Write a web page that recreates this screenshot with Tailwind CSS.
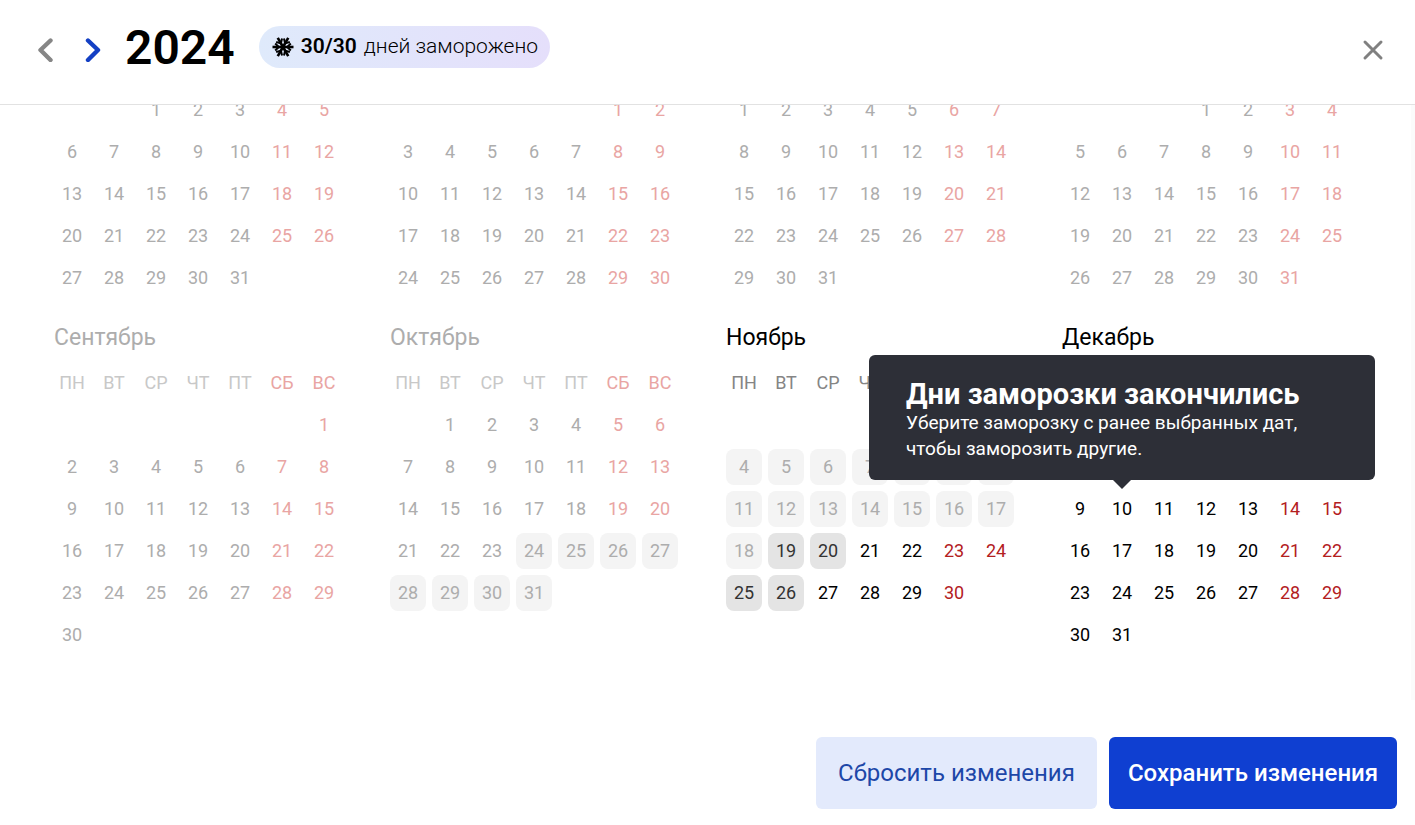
<!DOCTYPE html>
<html lang="ru">
<head>
    <meta charset="UTF-8">
    <meta name="viewport" content="width=device-width, initial-scale=1.0">
    <title>Заморозка дней</title>
    <script src="https://cdn.jsdelivr.net/npm/@tailwindcss/browser@4"></script>
</head>
<body class="bg-white font-['Roboto','Noto_Sans',sans-serif] text-black">
    <div class="flex h-screen flex-col">

        <!-- Шапка -->
        <header class="flex h-[105px] shrink-0 items-start border-b border-[#e2e2e2] pl-8 pr-[26px]">
            <button type="button" aria-label="Предыдущий год" class="mt-[38px] text-[#868686]">
                <svg class="h-6 w-6" viewBox="0 0 24 24" fill="none" stroke="currentColor" stroke-width="4.4" stroke-linecap="round" stroke-linejoin="round"><path d="M18.500 2.500L8.500 12l10 10"/></svg>
            </button>
            <button type="button" aria-label="Следующий год" class="ml-6 mt-[38px] text-[#1440c4]">
                <svg class="h-6 w-6" viewBox="0 0 24 24" fill="none" stroke="currentColor" stroke-width="4.4" stroke-linecap="round" stroke-linejoin="round"><path d="M8 2.500L18 12 8 22"/></svg>
            </button>
            <h1 class="ml-[21px] mt-5 text-5xl leading-14 font-semibold">2024</h1>
            <div class="ml-6 mt-[26px] flex h-[42px] items-center gap-1.5 rounded-full bg-linear-to-r from-[#dfeafb] to-[#e5dffb] px-3 text-[21px]">
                <svg class="h-6 w-6" viewBox="0 0 24 24" fill="none" stroke="currentColor" stroke-width="2.600">
                    <g id="arm"><path d="M12 12h10.500"/><path stroke-width="2" d="M19.800 8.600l-3.600 3.400 3.600 3.400"/></g>
                    <use href="#arm" transform="rotate(60 12 12)"/>
                    <use href="#arm" transform="rotate(120 12 12)"/>
                    <use href="#arm" transform="rotate(180 12 12)"/>
                    <use href="#arm" transform="rotate(240 12 12)"/>
                    <use href="#arm" transform="rotate(300 12 12)"/>
                </svg>
                <p class="font-light"><b class="mr-0.5 font-semibold">30/30</b> дней заморожено</p>
            </div>
            <button type="button" aria-label="Закрыть" class="ml-auto mt-[38px] text-[#808080]">
                <svg class="h-6 w-8" viewBox="0 0 32 24" fill="none" stroke="currentColor" stroke-width="3" stroke-linecap="round"><path d="M8 4l16 16M24 4L8 20"/></svg>
            </button>
        </header>

        <!-- Календарь, прокручен до конца года -->
        <main class="flex min-h-0 flex-1 flex-col justify-end overflow-hidden border-r-4 border-[#fbfbfb] pb-[41px] pl-[54px] pr-[13px]">
            <div id="calendar" class="grid grid-cols-4 gap-y-5"></div>
        </main>

        <!-- Кнопки -->
        <footer class="flex shrink-0 justify-end gap-3 pb-4 pr-[18px] pt-[37px] text-2xl">
            <button type="button" class="h-[72px] w-[281px] rounded-md bg-[#e3eafc] text-[#1d47a8]">Сбросить изменения</button>
            <button type="button" class="h-[72px] w-72 rounded-md bg-[#0f3fd1] font-medium text-white">Сохранить изменения</button>
        </footer>
    </div>

    <!-- Подсказка -->
    <template id="tooltip">
        <div role="tooltip" class="absolute bottom-[47px] left-[-235px] z-10 w-[506px] rounded-md bg-[#2d2f37] px-[37px] pb-[18px] pt-[23px] text-left text-white">
            <p class="text-[29px] leading-8 font-bold">Дни заморозки закончились</p>
            <p class="text-[19px] leading-[26px]">Уберите заморозку с ранее выбранных дат, чтобы заморозить другие.</p>
            <svg class="absolute left-1/2 top-full h-[9px] w-[18px] -translate-x-1/2 text-[#2d2f37]" viewBox="0 0 18 9" fill="currentColor"><path d="M0 0h18L9 9z"/></svg>
        </div>
    </template>

    <script>
        const weekdays = ['ПН', 'ВТ', 'СР', 'ЧТ', 'ПТ', 'СБ', 'ВС'];
        // today: первый доступный день месяца, frozen: замороженные дни
        const months = [
            { name: 'Май', num: 4, today: 32, frozen: [] },
            { name: 'Июнь', num: 5, today: 32, frozen: [] },
            { name: 'Июль', num: 6, today: 32, frozen: [] },
            { name: 'Август', num: 7, today: 32, frozen: [] },
            { name: 'Сентябрь', num: 8, today: 32, frozen: [] },
            { name: 'Октябрь', num: 9, today: 32, frozen: [24, 25, 26, 27, 28, 29, 30, 31] },
            { name: 'Ноябрь', num: 10, today: 19, frozen: [4, 5, 6, 7, 8, 9, 10, 11, 12, 13, 14, 15, 16, 17, 18, 19, 20, 25, 26] },
            { name: 'Декабрь', num: 11, today: 1, frozen: [] }
        ];
        // у месяцев выше этого заголовки уже прокручены
        const firstWithHeader = 8;

        const dayColor = (day, weekend, month) => {
            const past = day < month.today;
            if (month.frozen.includes(day)) {
                return past ? 'bg-[#f4f4f4] text-[#adadad]' : 'bg-[#e4e4e4] text-[#333333]';
            }
            if (weekend) return past ? 'text-[#e9a5a3]' : 'text-[#b3201e]';
            return past ? 'text-[#adadad]' : 'text-black';
        };

        const renderMonth = (month) => {
            const past = month.today > 31;
            const offset = (new Date(2024, month.num, 1).getDay() + 6) % 7;
            const total = new Date(2024, month.num + 1, 0).getDate();

            const head = weekdays.map((w, i) => {
                const color = i > 4 ? (past ? 'text-[#e9a5a3]' : 'text-[#b3201e]') : (past ? 'text-[#c8c8c8]' : 'text-[#858585]');
                return `<th scope="col" class="pb-1.5 pr-1.5"><div class="flex h-9 w-9 items-center justify-center font-normal ${color}">${w}</div></th>`;
            }).join('');

            let rows = '';
            for (let start = 1 - offset; start <= total; start += 7) {
                rows += '<tr>';
                for (let i = 0; i < 7; i++) {
                    const day = start + i;
                    if (day < 1 || day > total) {
                        rows += '<td class="h-[42px] w-[42px]"></td>';
                        continue;
                    }
                    const tip = month.num === 11 && day === 10 ? document.getElementById('tooltip').innerHTML : '';
                    rows += `<td class="pb-1.5 pr-1.5"><div class="relative"><button type="button" class="block h-9 w-9 rounded-lg ${dayColor(day, i > 4, month)}">${day}</button>${tip}</div></td>`;
                }
                rows += '</tr>';
            }

            const header = month.num >= firstWithHeader;
            return `<section>
                ${header ? `<h2 class="mb-[11px] text-[23px] leading-8 ${past ? 'text-[#adadad]' : 'text-black'}">${month.name}</h2>` : ''}
                <table aria-label="${month.name}" class="text-lg leading-6">${header ? `<thead><tr>${head}</tr></thead>` : ''}<tbody>${rows}</tbody></table>
            </section>`;
        };

        document.getElementById('calendar').innerHTML = months.map(renderMonth).join('');
    </script>
</body>
</html>
